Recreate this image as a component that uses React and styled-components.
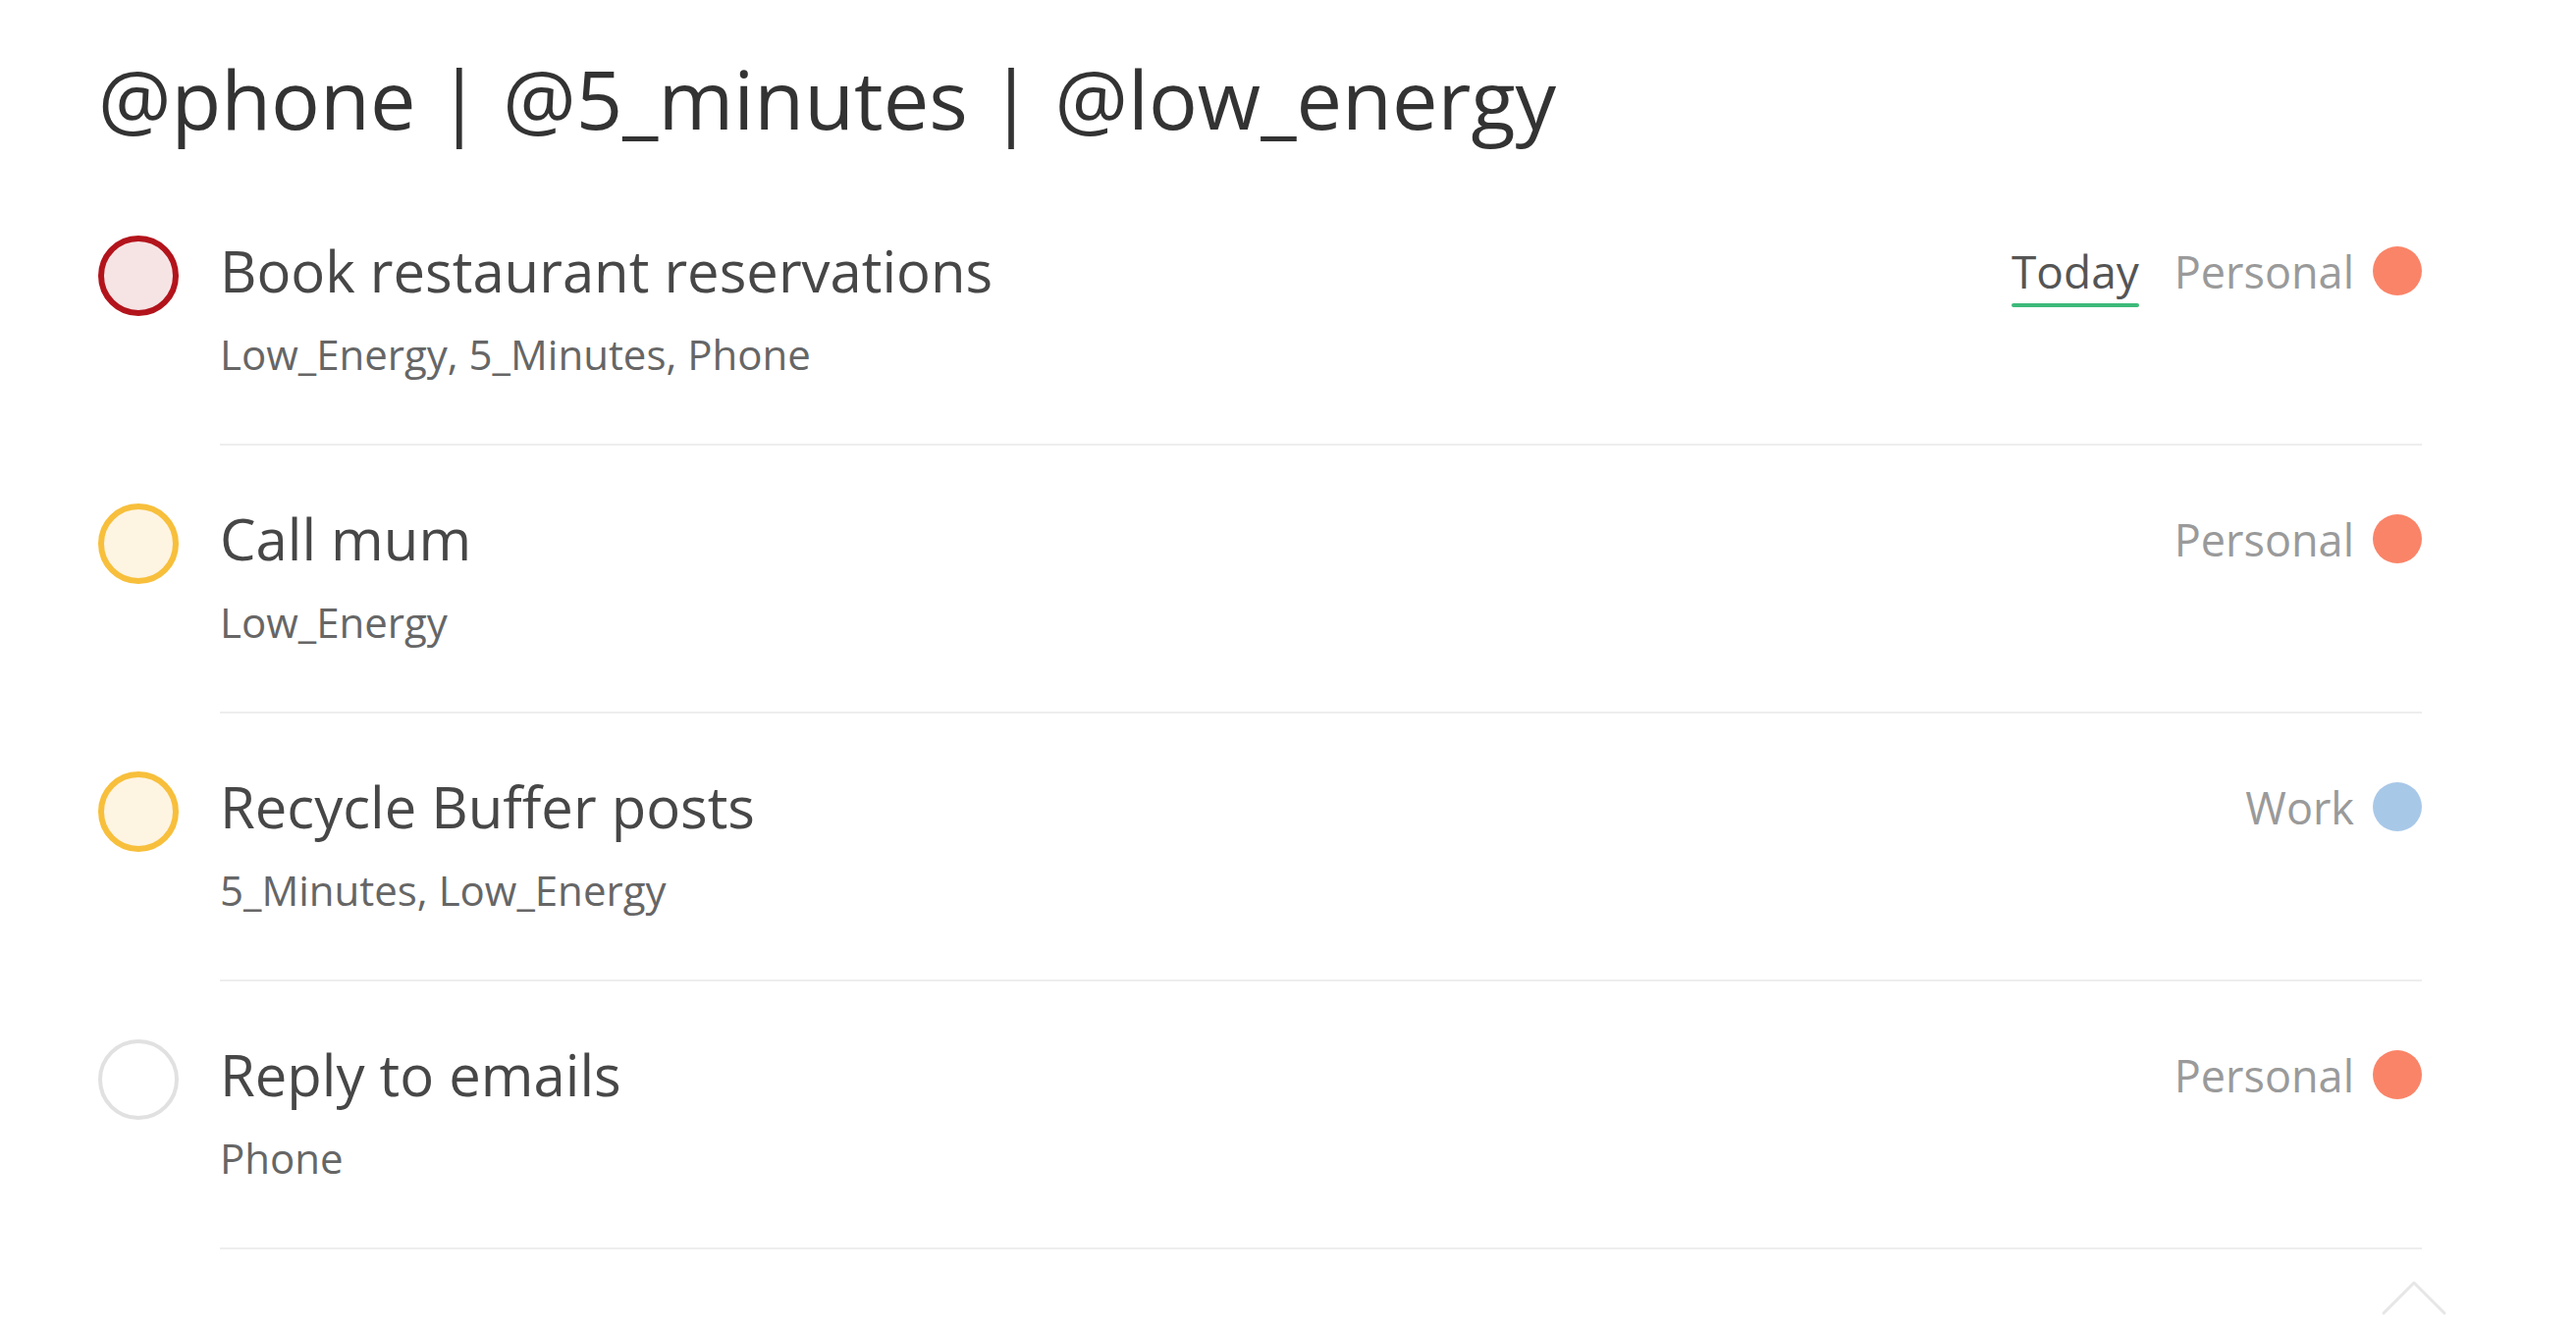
import React from "react";
import styled, { createGlobalStyle } from "styled-components";

const GlobalStyle = createGlobalStyle`
  html, body {
    margin: 0;
    padding: 0;
    background: #ffffff;
  }
  body {
    font-family: "Open Sans", "Noto Sans", sans-serif;
    -webkit-font-smoothing: antialiased;
  }
`;

const Page = styled.div`
  position: relative;
  min-height: 1348px;
  padding: 43px 157px 0 100px;
  box-sizing: border-box;
  overflow: hidden;
`;

const Heading = styled.h1`
  margin: 0;
  font-size: 83px;
  font-weight: 400;
  color: #333333;
  line-height: 113px;
`;

const TaskList = styled.ul`
  list-style: none;
  margin: 82px 0 0;
  padding: 0;
  display: flex;
  flex-direction: column;
  gap: 57px;
`;

const Row = styled.li`
  display: flex;
  align-items: flex-start;
  gap: 42px;
`;

const priorityColours = {
  high: { border: "#b3141c", fill: "#f6e4e5" },
  medium: { border: "#f7bf3b", fill: "#fef4e2" },
  none: { border: "#e1e1e1", fill: "#ffffff" },
};

const Check = styled.span`
  flex: none;
  width: 82px;
  height: 82px;
  margin-top: 2px;
  box-sizing: border-box;
  border-radius: 50%;
  border: ${({ $priority }) => ($priority === "none" ? "4px" : "6px")} solid
    ${({ $priority }) => priorityColours[$priority].border};
  background: ${({ $priority }) => priorityColours[$priority].fill};
`;

const Body = styled.div`
  flex: 1;
  padding-bottom: 63px;
  border-bottom: 2px solid #eeeeee;
`;

const TopLine = styled.div`
  display: flex;
  align-items: center;
  justify-content: space-between;
  height: 76px;
`;

const Title = styled.span`
  font-size: 58px;
  color: #474747;
  line-height: 76px;
`;

const Meta = styled.div`
  display: flex;
  align-items: center;
  font-size: 45px;
`;

const Due = styled.span`
  position: relative;
  color: #555555;
  font-size: 46px;
  margin-right: 36px;

  &::after {
    content: "";
    position: absolute;
    left: 0;
    right: 0;
    bottom: -6px;
    height: 4px;
    border-radius: 2px;
    background: #3dba7a;
  }
`;

const Project = styled.span`
  color: #9a9a9a;
`;

const Dot = styled.span`
  width: 50px;
  height: 50px;
  margin-left: 19px;
  border-radius: 50%;
  background: ${({ $color }) => $color};
`;

const Tags = styled.div`
  margin-top: 18px;
  font-size: 42px;
  color: #666666;
`;

const ScrollTop = styled.button`
  position: absolute;
  left: 2424px;
  top: 1303px;
  width: 70px;
  height: 40px;
  padding: 0;
  border: none;
  background: none;
  cursor: pointer;
`;

const projects = {
  Personal: "#fa8468",
  Work: "#a8c8e8",
};

const tasks = [
  {
    title: "Book restaurant reservations",
    tags: "Low_Energy, 5_Minutes, Phone",
    priority: "high",
    due: "Today",
    project: "Personal",
  },
  {
    title: "Call mum",
    tags: "Low_Energy",
    priority: "medium",
    project: "Personal",
  },
  {
    title: "Recycle Buffer posts",
    tags: "5_Minutes, Low_Energy",
    priority: "medium",
    project: "Work",
  },
  {
    title: "Reply to emails",
    tags: "Phone",
    priority: "none",
    project: "Personal",
  },
];

export default function App() {
  return (
    <>
      <GlobalStyle />
      <Page>
        <Heading>@phone | @5_minutes | @low_energy</Heading>
        <TaskList>
          {tasks.map((task) => (
            <Row key={task.title}>
              <Check $priority={task.priority} />
              <Body>
                <TopLine>
                  <Title>{task.title}</Title>
                  <Meta>
                    {task.due && <Due>{task.due}</Due>}
                    <Project>{task.project}</Project>
                    <Dot $color={projects[task.project]} />
                  </Meta>
                </TopLine>
                <Tags>{task.tags}</Tags>
              </Body>
            </Row>
          ))}
        </TaskList>
        <ScrollTop aria-label="Back to top">
          <svg width="70" height="40" viewBox="0 0 70 40" fill="none">
            <path
              d="M4 35 L35 4 L66 35"
              stroke="#e6e6e6"
              strokeWidth="3"
              strokeLinecap="round"
              strokeLinejoin="round"
            />
          </svg>
        </ScrollTop>
      </Page>
    </>
  );
}
